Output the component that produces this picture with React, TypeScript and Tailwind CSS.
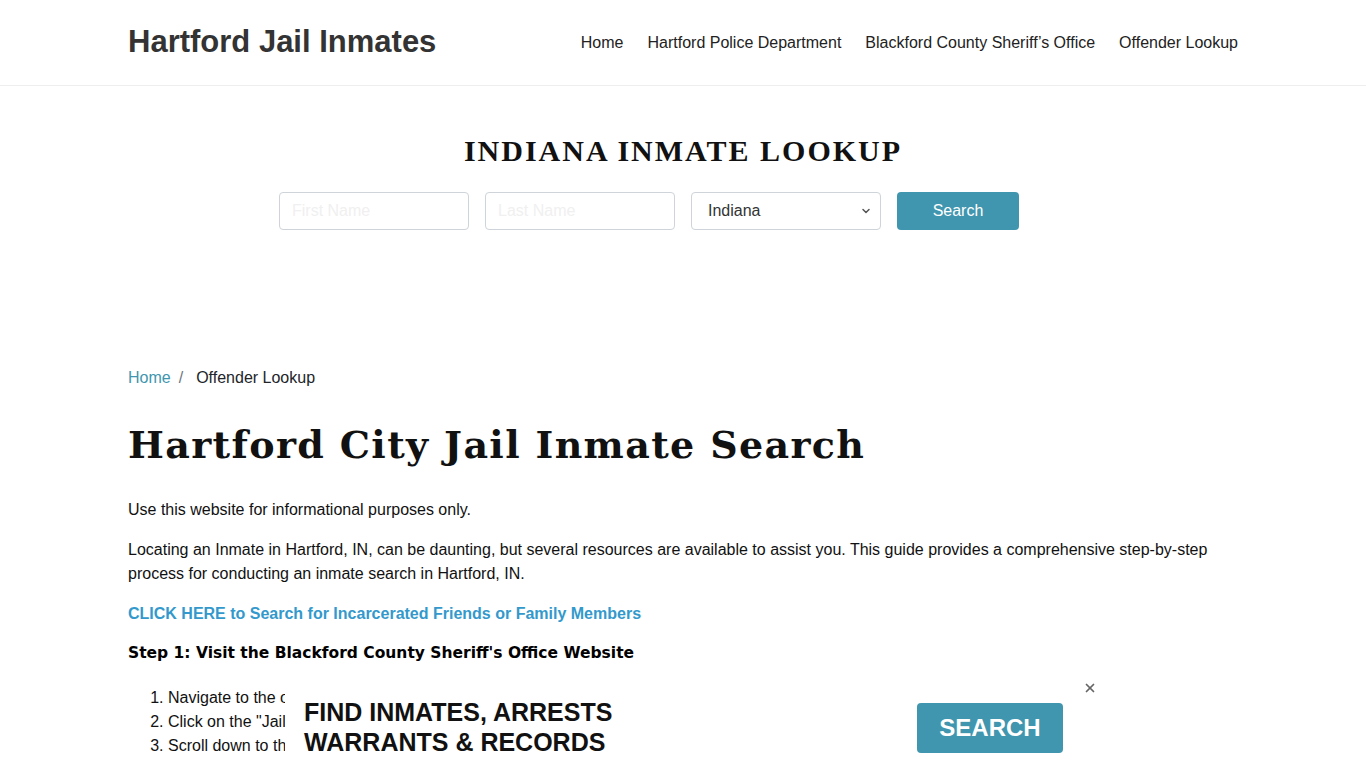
import { ChevronDown, X } from "lucide-react";

const sans = { fontFamily: '"Liberation Sans", Arial, sans-serif' };
const serif = { fontFamily: '"Liberation Serif", "Times New Roman", serif' };
const wideSerif = { fontFamily: '"DejaVu Serif", Georgia, serif' };
const heavy = { fontFamily: '"DejaVu Sans", Verdana, sans-serif' };

export default function App() {
  return (
    <div className="min-h-screen bg-white text-[#212529]" style={sans}>
      <header className="border-b border-[#eeeeee]">
        <div className="mx-auto flex h-[85px] w-[1110px] items-center justify-between">
          <a className="text-[31px] font-bold text-[#333333]">Hartford Jail Inmates</a>
          <nav className="flex gap-6 text-[16px] text-[#222222]">
            <a>Home</a>
            <a>Hartford Police Department</a>
            <a>Blackford County Sheriff’s Office</a>
            <a>Offender Lookup</a>
          </nav>
        </div>
      </header>

      <section className="flex flex-col items-center pt-[42px]">
        <h2 className="text-[30px] font-bold tracking-[2px] text-[#111111]" style={serif}>
          INDIANA INMATE LOOKUP
        </h2>
        <form className="mr-[68px] mt-[19px] flex gap-4">
          <input
            placeholder="First Name"
            className="h-[38px] w-[190px] rounded border border-[#ced4da] px-3 text-[16px] placeholder:text-[#f0f0f0]"
          />
          <input
            placeholder="Last Name"
            className="h-[38px] w-[190px] rounded border border-[#ced4da] px-3 text-[16px] placeholder:text-[#f0f0f0]"
          />
          <div className="flex h-[38px] w-[190px] items-center justify-between rounded border border-[#ced4da] pl-4 pr-2 text-[16px] text-[#333333]">
            <span>Indiana</span>
            <ChevronDown size={12} strokeWidth={3} className="text-[#555555]" />
          </div>
          <button type="button" className="h-[38px] w-[122px] rounded bg-[#4096ae] text-[16px] text-white">
            Search
          </button>
        </form>
      </section>

      <main className="mx-auto mt-[136px] w-[1110px]">
        <div className="flex text-[16px]">
          <a className="text-[#4096ae]">Home</a>
          <span className="pl-2 pr-[13px] text-[#6c757d]">/</span>
          <span className="text-[#212529]">Offender Lookup</span>
        </div>
        <h1 className="mt-[26px] text-[38px] font-bold tracking-[1.35px] text-[#111111]" style={wideSerif}>
          Hartford City Jail Inmate Search
        </h1>
        <div className="mt-[25px] text-[16px] leading-6 text-[#111111]">
          <p>Use this website for informational purposes only.</p>
          <p className="mt-4">
            Locating an Inmate in Hartford, IN, can be daunting, but several resources are available to assist you. This guide provides a comprehensive step-by-step process for conducting an inmate search in Hartford, IN.
          </p>
          <p className="mt-4">
            <a className="font-bold text-[#3399cc]">CLICK HERE to Search for Incarcerated Friends or Family Members</a>
          </p>
          <p className="mt-[15px] text-[15.5px] font-bold text-black" style={heavy}>
            Step 1: Visit the Blackford County Sheriff's Office Website
          </p>
          <ol className="mt-[21px] list-decimal pl-10">
            <li>Navigate to the official Blackford County Sheriff's Office website.</li>
            <li>Click on the "Jail" or "Inmate Information" section.</li>
            <li>Scroll down to the inmate roster.</li>
          </ol>
        </div>
      </main>

      <div className="fixed bottom-0 left-[285px] flex h-[92px] w-[820px] items-center bg-white pl-[19px]">
        <div className="mt-[10px] text-[25px] font-bold leading-[30px] text-[#111111]">
          <div>FIND INMATES, ARRESTS</div>
          <div>WARRANTS &amp; RECORDS</div>
        </div>
        <button type="button" className="ml-auto mr-[42px] mt-[12px] h-[50px] w-[146px] rounded bg-[#4096ae] text-[24px] font-bold text-white">
          SEARCH
        </button>
        <X size={14} strokeWidth={3} className="absolute right-[8px] top-[5px] text-[#666666]" />
      </div>
    </div>
  );
}
